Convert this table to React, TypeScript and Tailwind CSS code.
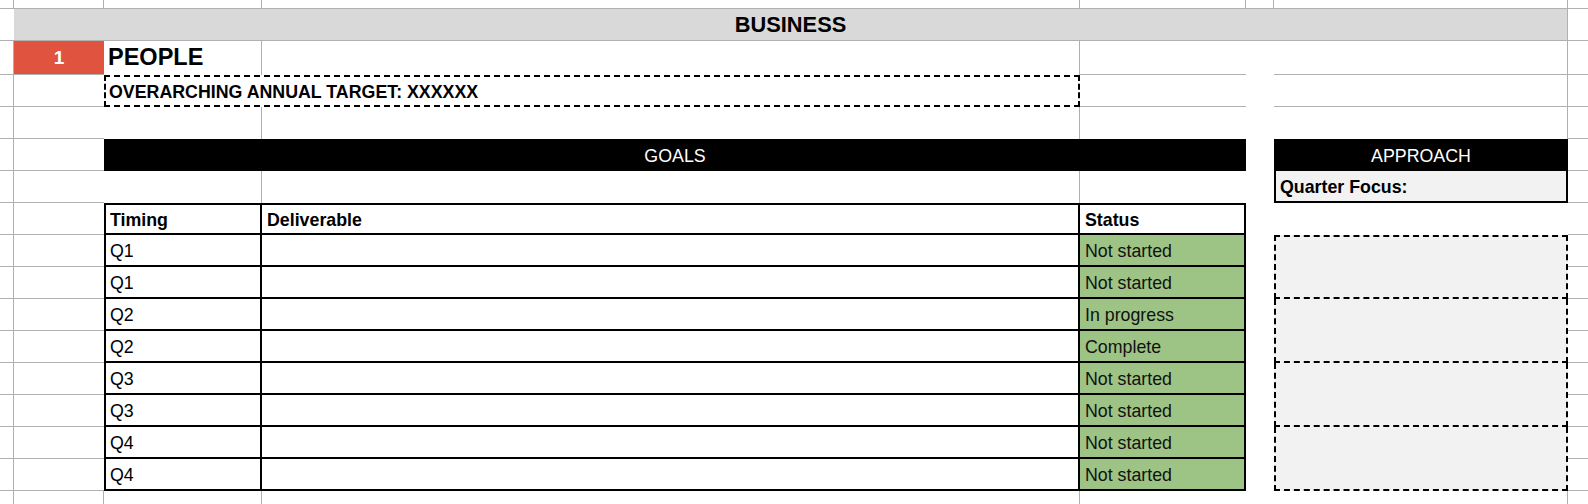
const line = "border-[#b0b0b0]";
const txt = "text-[17.8px] leading-none";

const goals = [
  { q: "Q1", status: "Not started" },
  { q: "Q1", status: "Not started" },
  { q: "Q2", status: "In progress" },
  { q: "Q2", status: "Complete" },
  { q: "Q3", status: "Not started" },
  { q: "Q3", status: "Not started" },
  { q: "Q4", status: "Not started" },
  { q: "Q4", status: "Not started" },
];

export default function App() {
  return (
    <div className="w-[1588px] h-[504px] overflow-hidden bg-white text-black font-['Liberation_Sans',Arial,sans-serif]">
      <div className="grid grid-cols-[14px_90px_158px_818px_166px_28px_294px_20px] grid-rows-[9px_32px_34px_32px_32px_32px_32px_32px_repeat(8,32px)_13px]">
        {/* top partial row */}
        <div className={`border-r border-b ${line}`} />
        <div className={`border-r border-b ${line}`} />
        <div className={`border-r border-b ${line}`} />
        <div className={`border-r border-b ${line}`} />
        <div className={`border-r border-b ${line}`} />
        <div className={`border-r border-b ${line}`} />
        <div className={`border-r border-b ${line}`} />
        <div className={`border-b ${line}`} />

        {/* business band */}
        <div className={`border-b ${line}`} />
        <div className={`col-span-6 flex items-center justify-center bg-[#d9d9d9] border-r border-b ${line}`}>
          <span className="text-[21.8px] font-bold leading-none">BUSINESS</span>
        </div>
        <div className={`border-b ${line}`} />

        {/* people row */}
        <div className={`border-r border-b ${line}`} />
        <div className={`flex items-center justify-center bg-[#e0533f] border-b ${line}`}>
          <span className="text-[19px] font-bold leading-none text-white">1</span>
        </div>
        <div className={`flex items-center pl-1 border-r ${line}`}>
          <span className="text-[23.5px] font-bold leading-none">PEOPLE</span>
        </div>
        <div className={`border-r ${line}`} />
        <div className={`border-b ${line}`} />
        <div />
        <div className={`border-r border-b ${line}`} />
        <div className={`border-b ${line}`} />

        {/* annual target */}
        <div className={`border-r border-b ${line}`} />
        <div className={`border-b ${line}`} />
        <div className="col-span-2 flex items-center pl-[3px] pt-1 border-2 border-dashed border-black">
          <span className={`${txt} font-bold`}>OVERARCHING ANNUAL TARGET: XXXXXX</span>
        </div>
        <div className={`border-b ${line}`} />
        <div />
        <div className={`border-r border-b ${line}`} />
        <div className={`border-b ${line}`} />

        {/* spacer */}
        <div className={`border-r border-b ${line}`} />
        <div className={`border-b ${line}`} />
        <div className={`border-r ${line}`} />
        <div className={`border-r ${line}`} />
        <div />
        <div />
        <div className={`border-r ${line}`} />
        <div className={`border-b ${line}`} />

        {/* section bars */}
        <div className={`border-r border-b ${line}`} />
        <div className={`border-b ${line}`} />
        <div className="col-span-3 flex items-center justify-center pt-1 bg-black">
          <span className={`${txt} text-white`}>GOALS</span>
        </div>
        <div />
        <div className="flex items-center justify-center pt-1 bg-black">
          <span className={`${txt} text-white`}>APPROACH</span>
        </div>
        <div className={`border-b ${line}`} />

        {/* quarter focus */}
        <div className={`border-r border-b ${line}`} />
        <div className={`border-b ${line}`} />
        <div className={`border-r ${line}`} />
        <div className={`border-r ${line}`} />
        <div />
        <div />
        <div className="flex items-center pl-1 pt-1 bg-[#f2f2f2] border-2 border-t-0 border-black">
          <span className={`${txt} font-bold`}>Quarter Focus:</span>
        </div>
        <div className={`border-b ${line}`} />

        {/* table header */}
        <div className={`border-r border-b ${line}`} />
        <div className={`border-b ${line}`} />
        <div className="flex items-center pl-1 pt-1 border-2 border-black">
          <span className={`${txt} font-bold`}>Timing</span>
        </div>
        <div className="flex items-center pl-[5px] pt-1 border-y-2 border-r-2 border-black">
          <span className={`${txt} font-bold`}>Deliverable</span>
        </div>
        <div className="flex items-center pl-[5px] pt-1 border-y-2 border-r-2 border-black">
          <span className={`${txt} font-bold`}>Status</span>
        </div>
        <div />
        <div />
        <div className={`border-b ${line}`} />

        {/* goal rows */}
        {goals.map((g, i) => (
          <Row key={i} q={g.q} status={g.status} first={i === 0} box={i % 2 === 0} />
        ))}

        {/* bottom partial row */}
        <div className={`border-r ${line}`} />
        <div className={`border-r ${line}`} />
        <div className={`border-r ${line}`} />
        <div className={`border-r ${line}`} />
        <div />
        <div />
        <div className={`border-r ${line}`} />
        <div />
      </div>
    </div>
  );
}

function Row({ q, status, first, box }: { q: string; status: string; first: boolean; box: boolean }) {
  return (
    <>
      <div className={`border-r border-b ${line}`} />
      <div className={`border-b ${line}`} />
      <div className="flex items-center pl-1 pt-1 border-x-2 border-b-2 border-black">
        <span className={txt}>{q}</span>
      </div>
      <div className="border-r-2 border-b-2 border-black" />
      <div className="flex items-center pl-[5px] pt-1 bg-[#9dc485] border-r-2 border-b-2 border-black">
        <span className={`${txt} text-[#111]`}>{status}</span>
      </div>
      <div />
      {box && (
        <div
          className={`row-span-2 bg-[#f2f2f2] border-x-2 border-b-2 border-dashed border-black ${
            first ? "border-t-2" : ""
          }`}
        />
      )}
      <div className={`border-b ${line}`} />
    </>
  );
}
